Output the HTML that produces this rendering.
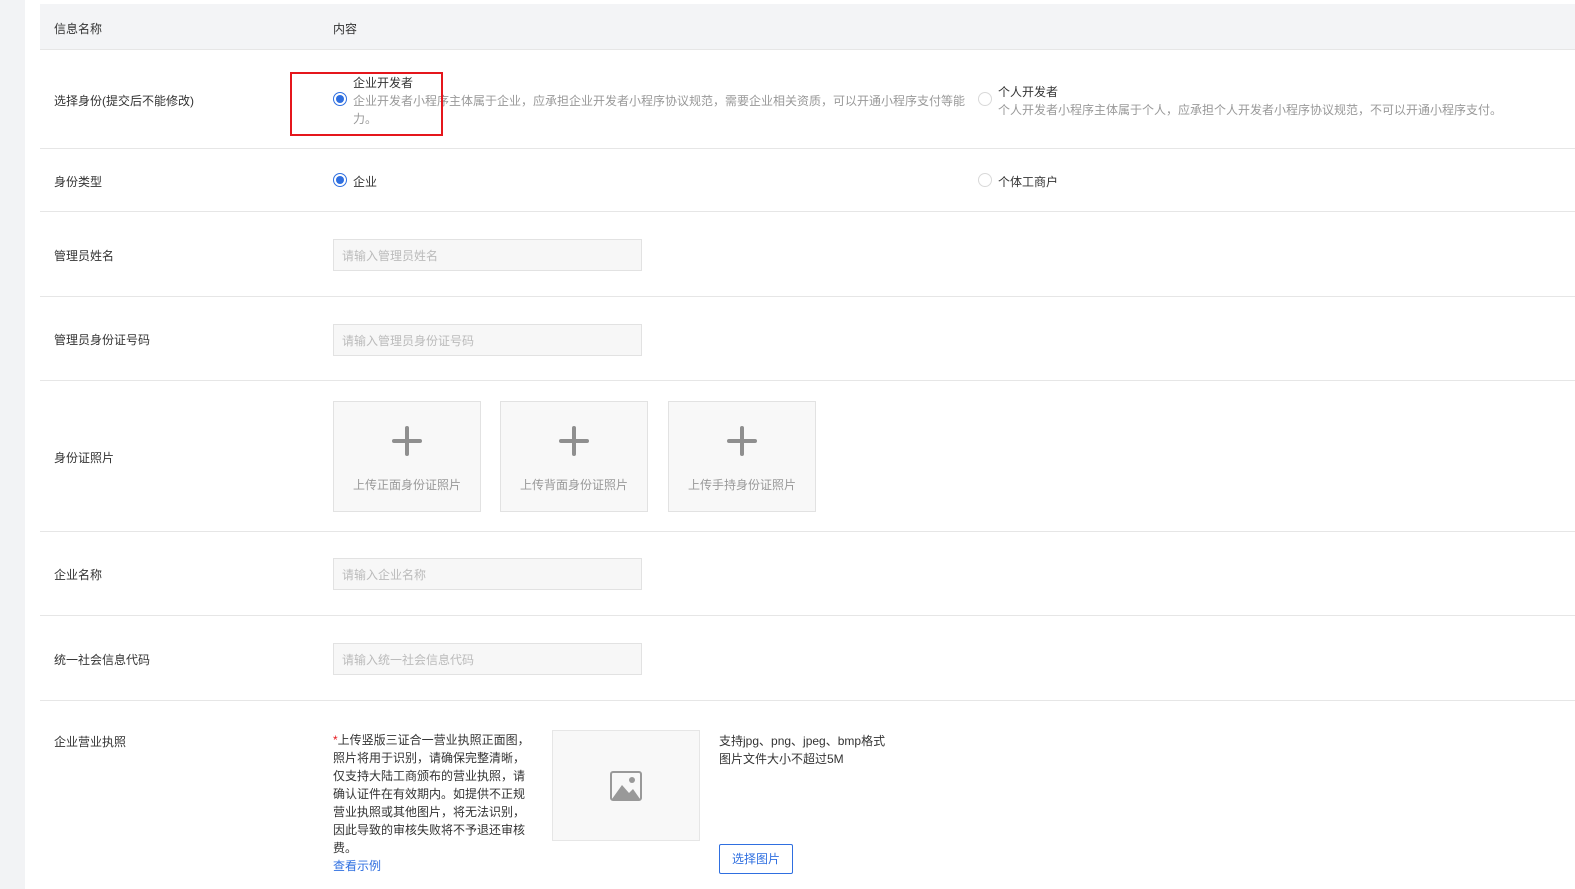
<!DOCTYPE html>
<html><head><meta charset="utf-8"><style>
*{margin:0;padding:0;box-sizing:border-box}
body{width:1575px;height:889px;overflow:hidden;background:#fff;font-family:"Liberation Sans","Noto Sans CJK SC",sans-serif;font-size:12px;color:#333;position:relative}
.side{position:absolute;left:0;top:0;width:25px;height:889px;background:#f2f3f5}
.a{position:absolute;white-space:nowrap}
.hd{position:absolute;left:40px;top:4px;right:0;height:46px;background:#f3f4f6;border-bottom:1px solid #e6e6e6}
.ln{position:absolute;left:40px;right:0;height:1px;background:#e6e6e6}
.rad{position:absolute;width:14px;height:14px;border-radius:50%;border:1px solid #2f6fe0;background:#fff}
.rad::after{content:"";position:absolute;left:2px;top:2px;width:8px;height:8px;border-radius:50%;background:#2f6fe0}
.rad0{position:absolute;width:14px;height:14px;border-radius:50%;border:1px solid #d9d9d9;background:#fff}
.inp{position:absolute;left:333px;width:309px;height:32px;border:1px solid #e2e2e2;background:#f7f7f7;color:#bbb;padding:8px;line-height:16px}
.up{position:absolute;top:401px;width:148px;height:111px;border:1px solid #e2e2e2;background:#f8f8f8;text-align:center;color:#999}
.up .p{position:absolute;left:58px;top:24px;width:30px;height:30px}
.up .p::before{content:"";position:absolute;left:0;top:13px;width:30px;height:4px;background:#8f8f8f;border-radius:2px}
.up .p::after{content:"";position:absolute;left:13px;top:0;width:4px;height:30px;background:#8f8f8f;border-radius:2px}
.up span{position:absolute;left:0;right:0;top:74px}
.g{color:#999}
</style></head><body>
<div class="side"></div>
<div class="hd"></div>
<div class="a" style="left:54px;top:20px">信息名称</div>
<div class="a" style="left:333px;top:20px">内容</div>
<div class="ln" style="top:148px"></div>
<div class="ln" style="top:211px"></div>
<div class="ln" style="top:296px"></div>
<div class="ln" style="top:380px"></div>
<div class="ln" style="top:531px"></div>
<div class="ln" style="top:615px"></div>
<div class="ln" style="top:700px"></div>

<div class="a" style="left:54px;top:92px">选择身份(提交后不能修改)</div>
<div class="rad" style="left:333px;top:92px"></div>
<div class="a" style="left:353px;top:74px">企业开发者</div>
<div class="a g" style="left:353px;top:92px">企业开发者小程序主体属于企业，应承担企业开发者小程序协议规范，需要企业相关资质，可以开通小程序支付等能</div>
<div class="a g" style="left:353px;top:110px">力。</div>
<div style="position:absolute;left:290px;top:72px;width:153px;height:64px;border:2px solid #e5161c"></div>
<div class="rad0" style="left:978px;top:92px"></div>
<div class="a" style="left:998px;top:83px">个人开发者</div>
<div class="a g" style="left:998px;top:101px">个人开发者小程序主体属于个人，应承担个人开发者小程序协议规范，不可以开通小程序支付。</div>

<div class="a" style="left:54px;top:173px">身份类型</div>
<div class="rad" style="left:333px;top:173px"></div>
<div class="a" style="left:353px;top:173px">企业</div>
<div class="rad0" style="left:978px;top:173px"></div>
<div class="a" style="left:998px;top:173px">个体工商户</div>

<div class="a" style="left:54px;top:247px">管理员姓名</div>
<div class="inp" style="top:239px">请输入管理员姓名</div>
<div class="a" style="left:54px;top:331px">管理员身份证号码</div>
<div class="inp" style="top:324px">请输入管理员身份证号码</div>

<div class="a" style="left:54px;top:449px">身份证照片</div>
<div class="up" style="left:333px"><div class="p"></div><span>上传正面身份证照片</span></div>
<div class="up" style="left:500px"><div class="p"></div><span>上传背面身份证照片</span></div>
<div class="up" style="left:668px"><div class="p"></div><span>上传手持身份证照片</span></div>

<div class="a" style="left:54px;top:566px">企业名称</div>
<div class="inp" style="top:558px">请输入企业名称</div>
<div class="a" style="left:54px;top:651px">统一社会信息代码</div>
<div class="inp" style="top:643px">请输入统一社会信息代码</div>

<div class="a" style="left:54px;top:733px">企业营业执照</div>
<div style="position:absolute;left:333px;top:731px;width:200px;line-height:18px"><span style="color:#e5161c">*</span>上传竖版三证合一营业执照正面图，照片将用于识别，请确保完整清晰，仅支持大陆工商颁布的营业执照，请确认证件在有效期内。如提供不正规营业执照或其他图片，将无法识别，因此导致的审核失败将不予退还审核费。<br><span style="color:#2f6fe0">查看示例</span></div>
<div style="position:absolute;left:552px;top:730px;width:148px;height:111px;border:1px solid #e6e6e6;background:#f8f8f8">
<svg style="position:absolute;left:57px;top:40px" width="32" height="30" viewBox="0 0 32 30"><rect x="1" y="1" width="30" height="28" rx="2" fill="none" stroke="#999" stroke-width="2"/><circle cx="22" cy="9" r="3" fill="#999"/><path d="M2 28 L12 14 L19 22 L23 18 L30 28 Z" fill="#999"/></svg></div>
<div style="position:absolute;left:719px;top:732px;line-height:18px">支持jpg、png、jpeg、bmp格式<br>图片文件大小不超过5M</div>
<div style="position:absolute;left:719px;top:844px;width:74px;height:30px;border:1px solid #2f6fe0;border-radius:2px;color:#2f6fe0;text-align:center;line-height:28px">选择图片</div>
</body></html>
